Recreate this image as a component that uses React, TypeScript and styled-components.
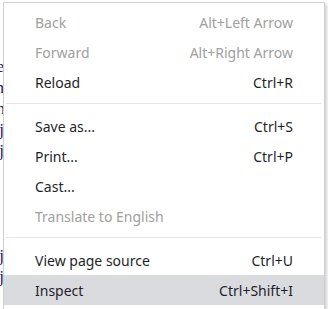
import styled, { createGlobalStyle } from "styled-components";

type Item = { label: string; shortcut?: string; disabled?: boolean; active?: boolean };

const groups: Item[][] = [
  [
    { label: "Back", shortcut: "Alt+Left Arrow", disabled: true },
    { label: "Forward", shortcut: "Alt+Right Arrow", disabled: true },
    { label: "Reload", shortcut: "Ctrl+R" },
  ],
  [
    { label: "Save as...", shortcut: "Ctrl+S" },
    { label: "Print...", shortcut: "Ctrl+P" },
    { label: "Cast..." },
    { label: "Translate to English", disabled: true },
  ],
  [
    { label: "View page source", shortcut: "Ctrl+U" },
    { label: "Inspect", shortcut: "Ctrl+Shift+I", active: true },
  ],
];

const pageLines = ["re", "in", "on", "ij", "gj", "", "", "", "", "oj", "ij"];

const GlobalStyle = createGlobalStyle`
  html, body {
    margin: 0;
    padding: 0;
    background: #fff;
    overflow: hidden;
  }
  body {
    font-family: "Noto Sans", "Open Sans", sans-serif;
  }
`;

export default function App() {
  return (
    <>
      <GlobalStyle />
      <Page>
        <PageText>
          {pageLines.map((l, i) => (
            <div key={i}>{l || "\u00a0"}</div>
          ))}
        </PageText>
        <Menu>
          {groups.map((group, gi) => (
            <div key={gi}>
              {gi > 0 && <Separator />}
              {group.map((item) => (
                <Row key={item.label} $disabled={item.disabled} $active={item.active}>
                  <span>{item.label}</span>
                  {item.shortcut && <span>{item.shortcut}</span>}
                </Row>
              ))}
            </div>
          ))}
        </Menu>
      </Page>
    </>
  );
}

const Page = styled.div`
  position: relative;
  width: 328px;
  height: 309px;
  overflow: hidden;
  background: #fff;
`;

const PageText = styled.div`
  padding-top: 56px;
  margin-left: -12px;
  font-family: "Liberation Serif", serif;
  font-size: 17px;
  line-height: 21px;
  color: #1a1a60;
  width: 16px;
  text-align: right;
`;

const Menu = styled.div`
  position: absolute;
  top: 2px;
  left: 3px;
  width: 320px;
  padding: 4px 0 6px;
  background: #fff;
  border: 1px solid #cfcfcf;
  box-shadow: 2px 2px 3px rgba(0, 0, 0, 0.18);
  font-family: "Noto Sans", "Open Sans", sans-serif;
  font-size: 14px;
`;

const Row = styled.div<{ $disabled?: boolean; $active?: boolean }>`
  display: flex;
  align-items: center;
  justify-content: space-between;
  height: 30px;
  padding: 0 31px 0 31px;
  color: ${(p) => (p.$disabled ? "#a0a0a0" : "#1f1f2a")};
  background: ${(p) => (p.$active ? "#dadbdf" : "transparent")};
  white-space: nowrap;
`;

const Separator = styled.div`
  height: 1px;
  margin: 6px 3px 7px 2px;
  background: #e6e6e6;
`;
